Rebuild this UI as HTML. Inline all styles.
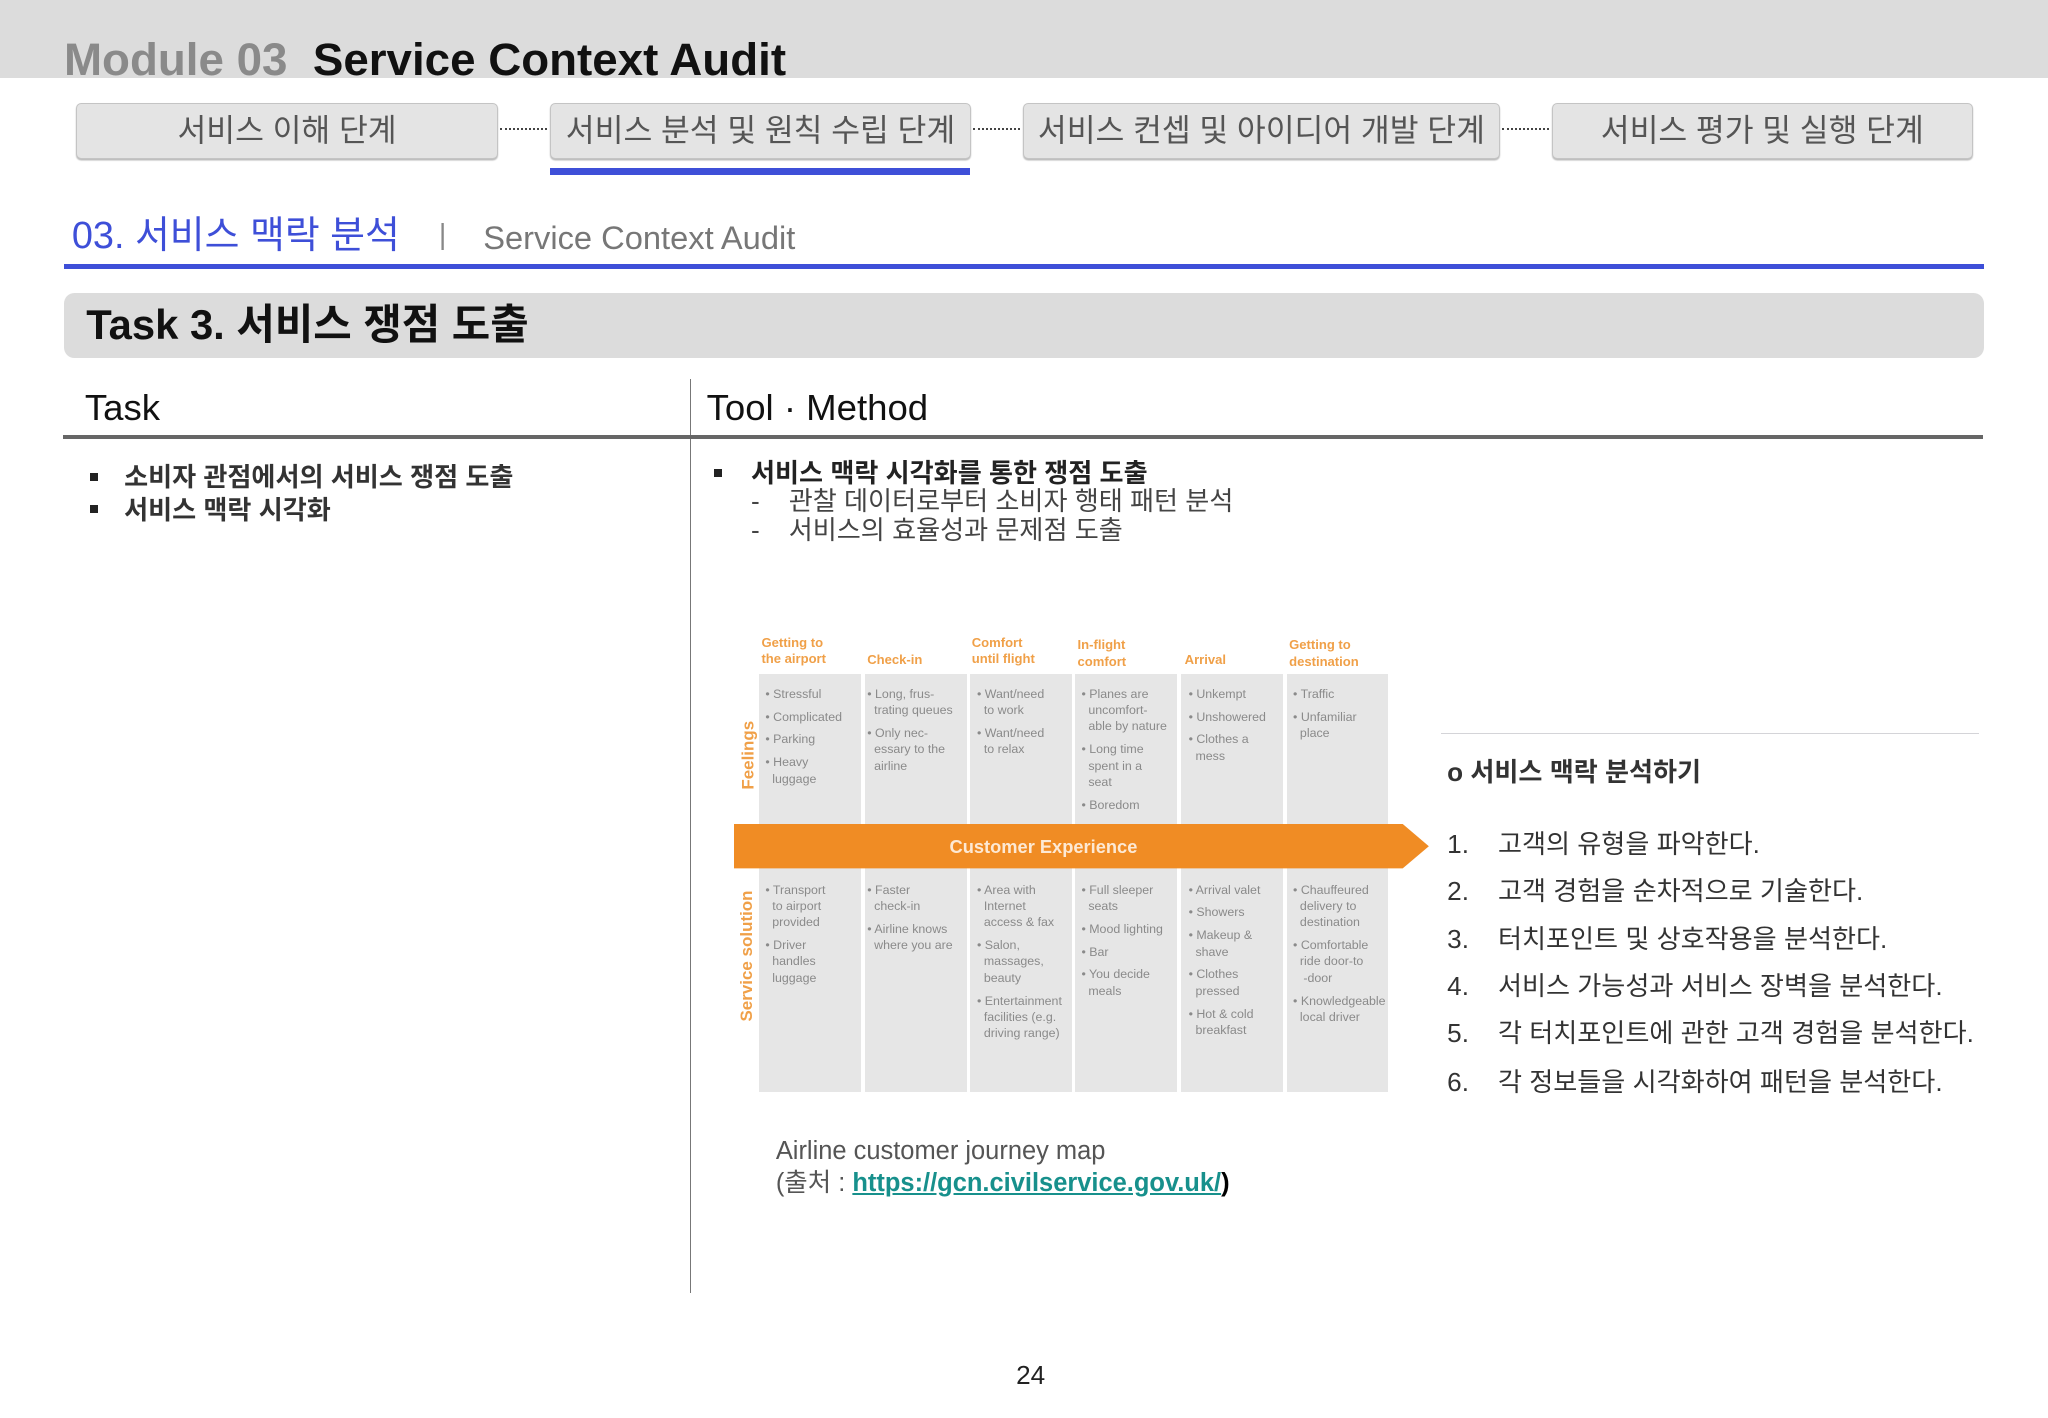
<!DOCTYPE html>
<html><head><meta charset="utf-8">
<style>
html,body{margin:0;padding:0;background:#fff;}
body{width:2048px;height:1418px;overflow:hidden;}
#p{position:relative;width:1568px;height:1086px;zoom:1.30612;font-family:"Liberation Sans","Noto Sans CJK KR",sans-serif;color:#222;}
.a{position:absolute;white-space:nowrap;}
.tab{position:absolute;top:79px;height:41px;background:#e4e4e4;border:1px solid #c4c4c4;border-radius:4px;box-shadow:0 1px 1px #bbb;font-size:24px;color:#555;text-align:center;line-height:41px;}
.dot{position:absolute;top:98px;height:0;border-top:2px dotted #444;}
.col{position:absolute;background:#e6e6e6;width:78px;}
.ct{position:absolute;font-size:9.5px;line-height:12.5px;color:#8a8a8a;font-family:"Liberation Sans",sans-serif;white-space:nowrap;}
.ct p{margin:0 0 5px 0;}
.hd{position:absolute;top:486px;font-size:10px;line-height:12.5px;color:#f0a048;font-weight:bold;font-family:"Liberation Sans",sans-serif;}
.num{position:absolute;left:1108px;font-size:20px;color:#333;}
</style></head><body><div id="p">
<div class="a" style="left:0;top:0;width:1568px;height:60px;background:#dcdcdc;"></div>
<div class="a" style="left:49px;top:24px;font-size:35px;line-height:44px;color:#8a8a8a;font-weight:bold;">Module 03 <span style="color:#111;">&nbsp;Service Context Audit</span></div>

<div class="tab" style="left:58px;width:322px;">서비스 이해 단계</div>
<div class="tab" style="left:421px;width:321px;">서비스 분석 및 원칙 수립 단계</div>
<div class="tab" style="left:783px;width:364px;">서비스 컨셉 및 아이디어 개발 단계</div>
<div class="tab" style="left:1188px;width:321px;">서비스 평가 및 실행 단계</div>
<div class="dot" style="left:383px;width:36px;"></div>
<div class="dot" style="left:745px;width:36px;"></div>
<div class="dot" style="left:1150px;width:36px;"></div>
<div class="a" style="left:421px;top:129px;width:322px;height:5px;background:#3e4fd8;"></div>

<div class="a" style="left:55px;top:162px;font-size:29px;line-height:38px;color:#3e4fd8;">03. 서비스 맥락 분석</div>
<div class="a" style="left:336px;top:168px;font-size:22px;color:#888;">|</div>
<div class="a" style="left:370px;top:165px;font-size:25px;line-height:34px;color:#777;">Service Context Audit</div>
<div class="a" style="left:49px;top:202px;width:1470px;height:4px;background:#3e4fd8;"></div>

<div class="a" style="left:49px;top:224px;width:1470px;height:50px;background:#dcdcdc;border-radius:8px;"></div>
<div class="a" style="left:66px;top:227px;font-size:32px;line-height:44px;color:#111;font-weight:bold;">Task 3. 서비스 쟁점 도출</div>

<div class="a" style="left:65px;top:293px;font-size:28px;line-height:38px;color:#111;">Task</div>
<div class="a" style="left:541px;top:293px;font-size:28px;line-height:38px;color:#111;">Tool · Method</div>
<div class="a" style="left:528px;top:290px;width:1px;height:700px;background:#777;"></div>
<div class="a" style="left:48px;top:333px;width:1470px;height:3px;background:#666;"></div>

<div class="a" style="left:69px;top:362px;width:6px;height:6px;background:#222;"></div>
<div class="a" style="left:69px;top:387px;width:6px;height:6px;background:#222;"></div>
<div class="a" style="left:95px;top:353px;font-size:20px;line-height:25px;color:#333;font-weight:bold;">소비자 관점에서의 서비스 쟁점 도출<br>서비스 맥락 시각화</div>

<div class="a" style="left:547px;top:359px;width:6px;height:6px;background:#222;"></div>
<div class="a" style="left:575px;top:351px;font-size:20px;line-height:24px;color:#222;font-weight:bold;">서비스 맥락 시각화를 통한 쟁점 도출</div>
<div class="a" style="left:575px;top:373px;font-size:20px;line-height:22px;color:#444;">-&nbsp;&nbsp;&nbsp;&nbsp;관찰 데이터로부터 소비자 행태 패턴 분석<br>-&nbsp;&nbsp;&nbsp;&nbsp;서비스의 효율성과 문제점 도출</div>

<!-- journey map -->
<div class="col" style="left:581px;top:516px;height:116px;"></div>
<div class="col" style="left:662px;top:516px;height:116px;"></div>
<div class="col" style="left:743px;top:516px;height:116px;"></div>
<div class="col" style="left:823px;top:516px;height:116px;"></div>
<div class="col" style="left:904px;top:516px;height:116px;"></div>
<div class="col" style="left:985px;top:516px;height:116px;"></div>
<div class="col" style="left:581px;top:664px;height:172px;"></div>
<div class="col" style="left:662px;top:664px;height:172px;"></div>
<div class="col" style="left:743px;top:664px;height:172px;"></div>
<div class="col" style="left:823px;top:664px;height:172px;"></div>
<div class="col" style="left:904px;top:664px;height:172px;"></div>
<div class="col" style="left:985px;top:664px;height:172px;"></div>
<svg class="a" style="left:562px;top:631px;" width="534" height="34"><polygon points="0,0 512,0 532,17 512,34 0,34" fill="#f08c24"/></svg>
<div class="a" style="left:727px;top:640px;font-size:14px;font-weight:bold;color:#fde9d4;font-family:'Liberation Sans',sans-serif;">Customer Experience</div>
<div class="a" style="left:548px;top:572px;width:50px;text-align:center;transform:rotate(-90deg);font-size:13px;font-weight:bold;color:#f0a048;font-family:'Liberation Sans',sans-serif;">Feelings</div>
<div class="a" style="left:520px;top:724px;width:104px;text-align:center;transform:rotate(-90deg);font-size:13px;font-weight:bold;color:#f0a048;font-family:'Liberation Sans',sans-serif;">Service solution</div>

<div class="hd" style="left:583px;">Getting to<br>the airport</div>
<div class="hd" style="left:664px;top:499px;">Check-in</div>
<div class="hd" style="left:744px;">Comfort<br>until flight</div>
<div class="hd" style="left:825px;top:488px;">In-flight<br>comfort</div>
<div class="hd" style="left:907px;top:499px;">Arrival</div>
<div class="hd" style="left:987px;top:488px;">Getting to<br>destination</div>

<div class="ct" style="left:586px;top:525px;"><p>• Stressful</p><p>• Complicated</p><p>• Parking</p><p>• Heavy<br>&nbsp;&nbsp;luggage</p></div>
<div class="ct" style="left:664px;top:525px;"><p>• Long, frus-<br>&nbsp;&nbsp;trating queues</p><p>• Only nec-<br>&nbsp;&nbsp;essary to the<br>&nbsp;&nbsp;airline</p></div>
<div class="ct" style="left:748px;top:525px;"><p>• Want/need<br>&nbsp;&nbsp;to work</p><p>• Want/need<br>&nbsp;&nbsp;to relax</p></div>
<div class="ct" style="left:828px;top:525px;"><p>• Planes are<br>&nbsp;&nbsp;uncomfort-<br>&nbsp;&nbsp;able by nature</p><p>• Long time<br>&nbsp;&nbsp;spent in a<br>&nbsp;&nbsp;seat</p><p>• Boredom</p></div>
<div class="ct" style="left:910px;top:525px;"><p>• Unkempt</p><p>• Unshowered</p><p>• Clothes a<br>&nbsp;&nbsp;mess</p></div>
<div class="ct" style="left:990px;top:525px;"><p>• Traffic</p><p>• Unfamiliar<br>&nbsp;&nbsp;place</p></div>

<div class="ct" style="left:586px;top:675px;"><p>• Transport<br>&nbsp;&nbsp;to airport<br>&nbsp;&nbsp;provided</p><p>• Driver<br>&nbsp;&nbsp;handles<br>&nbsp;&nbsp;luggage</p></div>
<div class="ct" style="left:664px;top:675px;"><p>• Faster<br>&nbsp;&nbsp;check-in</p><p>• Airline knows<br>&nbsp;&nbsp;where you are</p></div>
<div class="ct" style="left:748px;top:675px;"><p>• Area with<br>&nbsp;&nbsp;Internet<br>&nbsp;&nbsp;access &amp; fax</p><p>• Salon,<br>&nbsp;&nbsp;massages,<br>&nbsp;&nbsp;beauty</p><p>• Entertainment<br>&nbsp;&nbsp;facilities (e.g.<br>&nbsp;&nbsp;driving range)</p></div>
<div class="ct" style="left:828px;top:675px;"><p>• Full sleeper<br>&nbsp;&nbsp;seats</p><p>• Mood lighting</p><p>• Bar</p><p>• You decide<br>&nbsp;&nbsp;meals</p></div>
<div class="ct" style="left:910px;top:675px;"><p>• Arrival valet</p><p>• Showers</p><p>• Makeup &amp;<br>&nbsp;&nbsp;shave</p><p>• Clothes<br>&nbsp;&nbsp;pressed</p><p>• Hot &amp; cold<br>&nbsp;&nbsp;breakfast</p></div>
<div class="ct" style="left:990px;top:675px;"><p>• Chauffeured<br>&nbsp;&nbsp;delivery to<br>&nbsp;&nbsp;destination</p><p>• Comfortable<br>&nbsp;&nbsp;ride door-to<br>&nbsp;&nbsp;&nbsp;-door</p><p>• Knowledgeable<br>&nbsp;&nbsp;local driver</p></div>

<div class="a" style="left:594px;top:870px;font-size:19.5px;line-height:24px;color:#555;">Airline customer journey map<br>(출처 : <span style="color:#17908c;font-weight:bold;text-decoration:underline;">https://gcn.civilservice.gov.uk/</span><span style="color:#000;font-weight:bold;">)</span></div>

<!-- right text -->
<div class="a" style="left:1103px;top:561px;width:412px;height:1px;background:#d4d4d8;"></div>
<div class="a" style="left:1108px;top:577px;font-size:20px;line-height:28px;color:#333;font-weight:bold;">o 서비스 맥락 분석하기</div>
<div class="num" style="top:630px;">1.&nbsp;&nbsp;&nbsp;&nbsp;고객의 유형을 파악한다.</div>
<div class="num" style="top:666px;">2.&nbsp;&nbsp;&nbsp;&nbsp;고객 경험을 순차적으로 기술한다.</div>
<div class="num" style="top:703px;">3.&nbsp;&nbsp;&nbsp;&nbsp;터치포인트 및 상호작용을 분석한다.</div>
<div class="num" style="top:739px;">4.&nbsp;&nbsp;&nbsp;&nbsp;서비스 가능성과 서비스 장벽을 분석한다.</div>
<div class="num" style="top:775px;">5.&nbsp;&nbsp;&nbsp;&nbsp;각 터치포인트에 관한 고객 경험을 분석한다.</div>
<div class="num" style="top:812px;">6.&nbsp;&nbsp;&nbsp;&nbsp;각 정보들을 시각화하여 패턴을 분석한다.</div>

<div class="a" style="left:778px;top:1041px;font-size:20px;color:#222;">24</div>
</div></body></html>
